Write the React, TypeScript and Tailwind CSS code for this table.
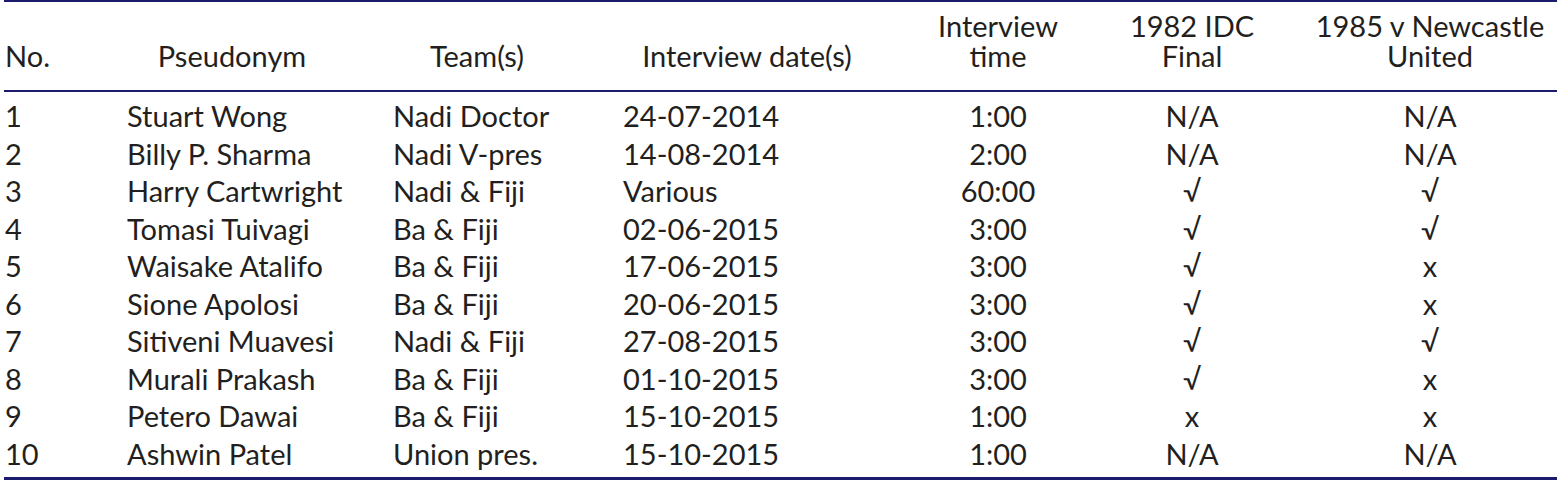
const rows = [
  ["1", "Stuart Wong", "Nadi Doctor", "24-07-2014", "1:00", "N/A", "N/A"],
  ["2", "Billy P. Sharma", "Nadi V-pres", "14-08-2014", "2:00", "N/A", "N/A"],
  ["3", "Harry Cartwright", "Nadi & Fiji", "Various", "60:00", "√", "√"],
  ["4", "Tomasi Tuivagi", "Ba & Fiji", "02-06-2015", "3:00", "√", "√"],
  ["5", "Waisake Atalifo", "Ba & Fiji", "17-06-2015", "3:00", "√", "x"],
  ["6", "Sione Apolosi", "Ba & Fiji", "20-06-2015", "3:00", "√", "x"],
  ["7", "Sitiveni Muavesi", "Nadi & Fiji", "27-08-2015", "3:00", "√", "√"],
  ["8", "Murali Prakash", "Ba & Fiji", "01-10-2015", "3:00", "√", "x"],
  ["9", "Petero Dawai", "Ba & Fiji", "15-10-2015", "1:00", "x", "x"],
  ["10", "Ashwin Patel", "Union pres.", "15-10-2015", "1:00", "N/A", "N/A"],
]

export default function App() {
  return (
    <div className="w-[1567px] h-[487px] bg-white pl-[4px] text-[#231f20] font-['Lato',sans-serif] text-[29px]">
      <table className="table-fixed border-collapse w-[1553px] border-t-2 border-b-[3px] border-[#1b1a6b]">
        <colgroup>
          <col className="w-[113px]" />
          <col className="w-[230px]" />
          <col className="w-[260px]" />
          <col className="w-[280px]" />
          <col className="w-[222px]" />
          <col className="w-[166px]" />
          <col className="w-[282px]" />
        </colgroup>
        <thead>
          <tr className="border-b-2 border-[#1b1a6b] align-bottom leading-[30px] font-normal">
            <th className="font-normal text-left pl-[1px] pt-[9px] pb-[19px]">No.</th>
            <th className="font-normal text-center pt-[9px] pb-[19px]">Pseudonym</th>
            <th className="font-normal text-center pt-[9px] pb-[19px]">Team(s)</th>
            <th className="font-normal text-center pt-[9px] pb-[19px]">Interview date(s)</th>
            <th className="font-normal text-center pt-[9px] pb-[19px]">
              Interview
              <br />
              time
            </th>
            <th className="font-normal text-center pt-[9px] pb-[19px]">
              1982 IDC
              <br />
              Final
            </th>
            <th className="font-normal text-center pl-[28px] pt-[9px] pb-[19px]">
              1985 v Newcastle
              <br />
              United
            </th>
          </tr>
        </thead>
        <tbody className="leading-[37.5px]">
          {rows.map((r, i) => {
            const pad = i === 0 ? "pt-[5px]" : i === rows.length - 1 ? "pb-[5px]" : ""
            return (
              <tr key={r[0]}>
                <td className={`pl-[1px] ${pad}`}>{r[0]}</td>
                <td className={`pl-[10px] ${pad}`}>{r[1]}</td>
                <td className={`pl-[46px] ${pad}`}>{r[2]}</td>
                <td className={`pl-[16px] ${pad}`}>{r[3]}</td>
                <td className={`text-center ${pad}`}>{r[4]}</td>
                <td className={`text-center ${pad}`}>{r[5]}</td>
                <td className={`text-center pl-[28px] ${pad}`}>{r[6]}</td>
              </tr>
            )
          })}
        </tbody>
      </table>
    </div>
  )
}
